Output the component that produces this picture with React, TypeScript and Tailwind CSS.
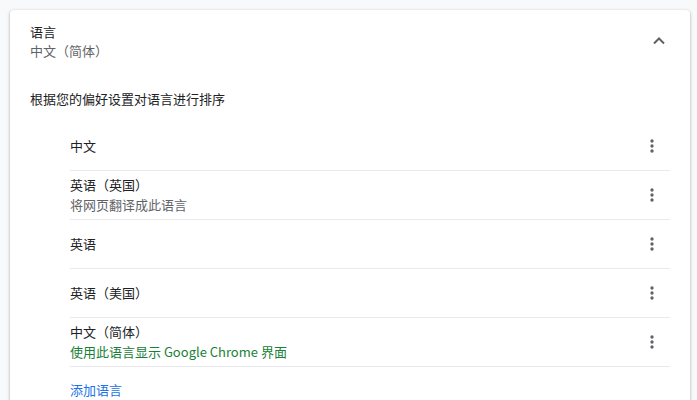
import { ReactNode } from 'react';

const font = { fontFamily: '"Noto Sans CJK SC", "Liberation Sans", sans-serif' };

function MoreIcon() {
  return (
    <svg width="20" height="20" viewBox="0 0 24 24" fill="#5f6368">
      <circle cx="12" cy="6" r="2" />
      <circle cx="12" cy="12" r="2" />
      <circle cx="12" cy="18" r="2" />
    </svg>
  );
}

function LangRow({ children, last = false }: { children: ReactNode; last?: boolean }) {
  return (
    <div className={`flex h-[49px] items-center ${last ? '' : 'border-b border-[#e8eaed]'}`}>
      <div className="flex-1 min-w-0">{children}</div>
      <button className="flex h-9 w-9 items-center justify-center rounded-full">
        <MoreIcon />
      </button>
    </div>
  );
}

const languages: { name: string; sub?: string; green?: boolean }[] = [
  { name: '中文' },
  { name: '英语（英国）', sub: '将网页翻译成此语言' },
  { name: '英语' },
  { name: '英语（美国）' },
  { name: '中文（简体）', sub: '使用此语言显示 Google Chrome 界面', green: true },
];

export default function App() {
  return (
    <div className="h-[400px] w-[697px] overflow-hidden bg-[#f8f9fa] pt-[10px] pl-[10px]" style={font}>
      <div className="w-[680px] rounded bg-white text-[13px] text-[#202124] shadow-[0_1px_2px_0_rgba(60,64,67,0.3),0_1px_3px_1px_rgba(60,64,67,0.15)]">
        <div className="flex h-[64px] items-center pl-5 pr-[24px] pb-[2px]">
          <div className="flex-1 leading-[19px]">
            <div>语言</div>
            <div className="text-[#5f6368]">中文（简体）</div>
          </div>
          <svg width="14" height="10" viewBox="0 0 14 10" fill="none">
            <path d="M2 7.5 L7 2.5 L12 7.5" stroke="#5f6368" strokeWidth="2" />
          </svg>
        </div>
        <div className="pl-5 pt-[15px] pb-[13px] leading-5">根据您的偏好设置对语言进行排序</div>
        <div className="pl-[60px] pr-5">
          {languages.map((l) => (
            <LangRow key={l.name + (l.sub ?? '')}>
              <div className="leading-5">{l.name}</div>
              {l.sub && (
                <div className={`leading-5 ${l.green ? 'text-[#188038]' : 'text-[#5f6368]'}`}>{l.sub}</div>
              )}
            </LangRow>
          ))}
          <div className="flex h-[46px] items-center justify-between">
            <span className="text-[#1a73e8]">添加语言</span>
          </div>
        </div>
      </div>
    </div>
  );
}
